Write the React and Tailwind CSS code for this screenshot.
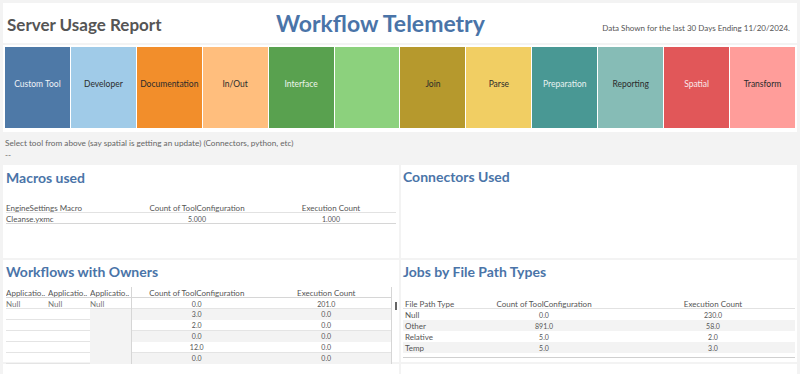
const tiles = [
  { name: "Custom Tool", bg: "bg-[#4e79a7]", text: "text-[#eef2f7]" },
  { name: "Developer", bg: "bg-[#a0cbe8]", text: "text-[#2b2b2b]" },
  { name: "Documentation", bg: "bg-[#f28e2b]", text: "text-[#2b2b2b]" },
  { name: "In/Out", bg: "bg-[#ffbe7d]", text: "text-[#2b2b2b]" },
  { name: "Interface", bg: "bg-[#59a14f]", text: "text-[#eef5ec]" },
  { name: "", bg: "bg-[#8cd17d]", text: "text-[#2b2b2b]" },
  { name: "Join", bg: "bg-[#b6992d]", text: "text-[#2b2b2b]" },
  { name: "Parse", bg: "bg-[#f1ce63]", text: "text-[#2b2b2b]" },
  { name: "Preparation", bg: "bg-[#499894]", text: "text-[#e8f2f1]" },
  { name: "Reporting", bg: "bg-[#86bcb6]", text: "text-[#2b2b2b]" },
  { name: "Spatial", bg: "bg-[#e15759]", text: "text-[#fbeaea]" },
  { name: "Transform", bg: "bg-[#ff9d9a]", text: "text-[#2b2b2b]" },
];

const owners = [
  ["0.0", "201.0"],
  ["3.0", "0.0"],
  ["2.0", "0.0"],
  ["0.0", "0.0"],
  ["12.0", "0.0"],
  ["0.0", "0.0"],
];

const paths = [
  ["Null", "0.0", "230.0"],
  ["Other", "891.0", "58.0"],
  ["Relative", "5.0", "2.0"],
  ["Temp", "5.0", "3.0"],
];

function Title({ children }) {
  return (
    <h2 className="text-[14px] font-bold leading-none text-[#4a74a8]">
      {children}
    </h2>
  );
}

export default function App() {
  return (
    <div
      className="w-[800px] h-[374px] overflow-hidden bg-[#f3f3f3] text-[#555]"
      style={{ fontFamily: '"Segoe UI", Lato, sans-serif' }}
    >
      {/* HEADER */}
      <div className="mx-[3px] mt-[3px] h-[40px] bg-white flex items-center px-[4px] whitespace-nowrap">
        <div className="w-[269px] text-[17px] font-bold text-[#555] pt-[3px]">
          Server Usage Report
        </div>
        <div className="w-[300px] text-[23px] font-bold text-[#4a74a8] pt-px">
          Workflow Telemetry
        </div>
        <div className="flex-1 text-right text-[8px] text-[#555] pt-[10px] pr-[3px]">
          Data Shown for the last 30 Days Ending 11/20/2024.
        </div>
      </div>

      {/* TOOL TILES */}
      <div className="mx-[3px] mt-[2px] bg-white p-[2px] h-[87px]">
        <div className="grid grid-cols-12 gap-px h-[81px]">
          {tiles.map((t, i) => (
            <div
              key={i}
              className={`${t.bg} ${t.text} flex items-center justify-center pb-[7px] text-[8.5px]`}
            >
              {t.name}
            </div>
          ))}
        </div>
      </div>

      {/* HINT */}
      <div className="px-[5px] pt-[5px] h-[33px] text-[8.2px] leading-[12px] text-[#666]">
        <div>Select tool from above (say spatial is getting an update) (Connectors, python, etc)</div>
        <div>--</div>
      </div>

      {/* PANELS */}
      <div className="grid grid-cols-[396px_396px] gap-x-[2px] gap-y-[2px] mx-[3px] grid-rows-[93px_102px_20px]">
        {/* Macros */}
        <div className="bg-white px-[3px] pt-[6px]">
          <Title>Macros used</Title>
          <div className="mt-[17px] text-[8px] text-[#555]">
            <div className="grid grid-cols-[120px_142px_126px] h-[11px] items-center border-b border-[#e2e2e2]">
              <div>EngineSettings Macro</div>
              <div className="text-center">Count of ToolConfiguration</div>
              <div className="text-center">Execution Count</div>
            </div>
            <div className="grid grid-cols-[120px_142px_126px] h-[11px] items-center border-b border-[#d6d6d6]">
              <div>Cleanse.yxmc</div>
              <div className="text-center text-[7px]">5.000</div>
              <div className="text-center text-[7px]">1.000</div>
            </div>
          </div>
        </div>

        {/* Connectors */}
        <div className="bg-white px-[2px] pt-[5px]">
          <Title>Connectors Used</Title>
        </div>

        {/* Workflows with Owners */}
        <div className="bg-white pl-[3px] pt-[5px] flex flex-col">
          <Title>Workflows with Owners</Title>
          <div className="mt-[8px] flex text-[8px]">
            <div className="w-[385px]">
              <div className="grid grid-cols-[42px_42px_42px_1fr_1fr] h-[11px] items-center border-b border-[#d6d6d6]">
                <div className="truncate">Applicatio..</div>
                <div className="truncate">Applicatio..</div>
                <div className="truncate border-r border-[#d6d6d6] h-full">Applicatio..</div>
                <div className="text-center">Count of ToolConfiguration</div>
                <div className="text-center">Execution Count</div>
              </div>
              {owners.map((r, i) => (
                <div
                  key={i}
                  className="grid grid-cols-[42px_42px_42px_1fr_1fr] h-[11px] items-center border-b border-[#e4e4e4] text-[7px]"
                >
                  <div className="text-[#777] text-[8px]">{i === 0 ? "Null" : ""}</div>
                  <div className="text-[#777] text-[8px]">{i === 0 ? "Null" : ""}</div>
                  <div
                    className={`h-full border-r border-[#d6d6d6] text-[#777] text-[8px] ${
                      i === 0 ? "" : "bg-[#f3f3f3]"
                    }`}
                  >
                    {i === 0 ? "Null" : ""}
                  </div>
                  <div className={`h-full flex items-center justify-center ${i % 2 ? "bg-[#f3f3f3]" : ""}`}>
                    {r[0]}
                  </div>
                  <div className={`h-full flex items-center justify-center ${i % 2 ? "bg-[#f3f3f3]" : ""}`}>
                    {r[1]}
                  </div>
                </div>
              ))}
            </div>
            <div className="flex-1 border-l border-[#d6d6d6] relative">
              <div className="absolute left-[3px] top-[15px] w-[2px] h-[8px] bg-[#666]" />
            </div>
          </div>
        </div>

        {/* Jobs by File Path Types */}
        <div className="bg-white pt-[5px] px-[2px]">
          <Title>Jobs by File Path Types</Title>
          <div className="mt-[19px] text-[8px]">
            <div className="grid grid-cols-[90px_102px_1fr] h-[11px] items-center border-b border-[#e2e2e2]">
              <div className="pl-[2px]">File Path Type</div>
              <div className="text-center">Count of ToolConfiguration</div>
              <div className="text-center pl-[36px]">Execution Count</div>
            </div>
            {paths.map((r, i) => (
              <div
                key={i}
                className={`grid grid-cols-[90px_102px_1fr] h-[11px] items-center ${
                  i % 2 ? "bg-[#f3f3f3]" : ""
                }`}
              >
                <div className="pl-[2px]">{r[0]}</div>
                <div className="text-center text-[7px]">{r[1]}</div>
                <div className="text-center pl-[36px] text-[7px]">{r[2]}</div>
              </div>
            ))}
            <div className="h-[5px] border-b border-[#d0d0d0]" />
          </div>
        </div>

        <div className="bg-white" />
        <div className="bg-white" />
      </div>
    </div>
  );
}
